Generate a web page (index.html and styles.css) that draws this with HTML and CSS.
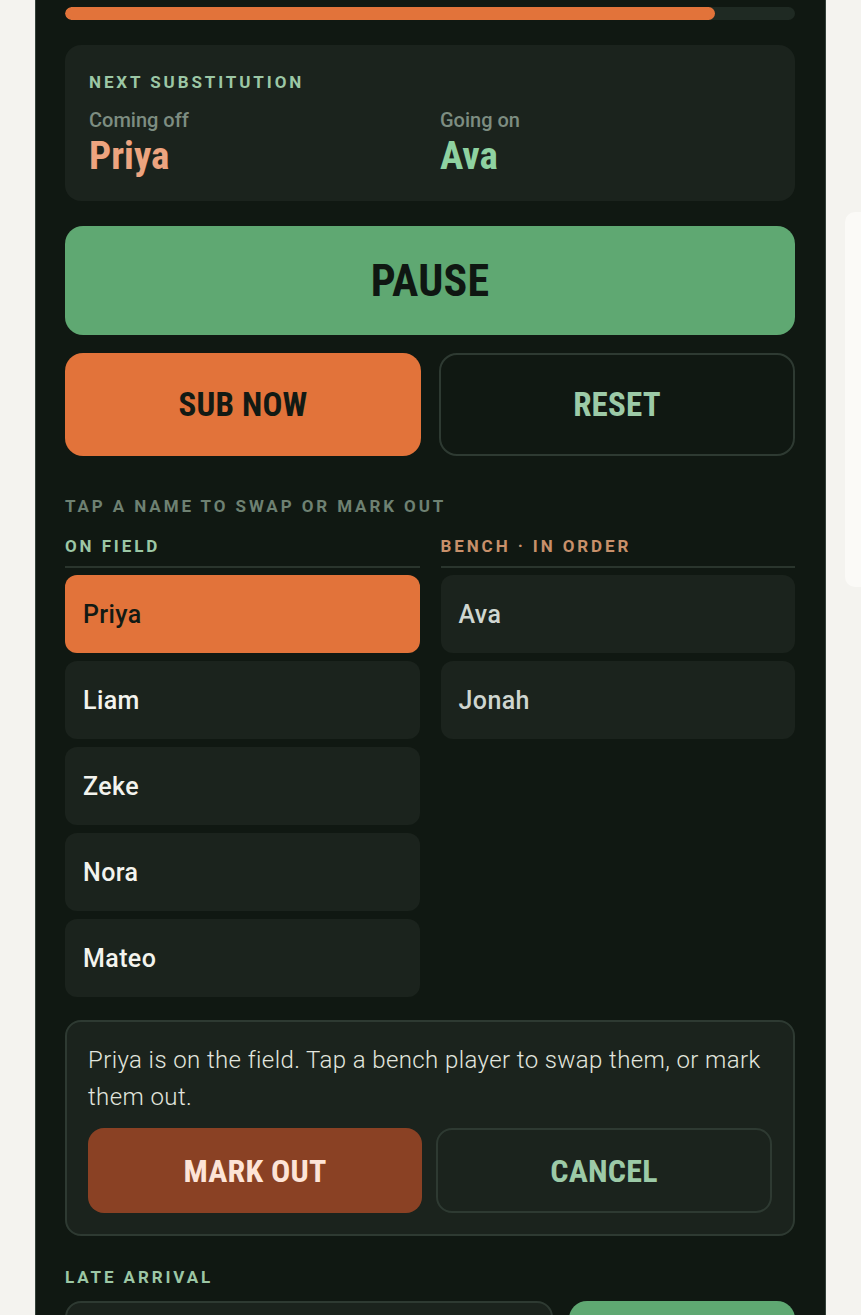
FILE: index.html
```html
<!DOCTYPE html>
<html lang="en">
<head>
<meta charset="utf-8">
<title>Substitution</title>
<link rel="stylesheet" href="styles.css">
</head>
<body>
<div class="page">
  <main class="panel">
    <div class="progress"><div class="progress-fill" style="width: 89%"></div></div>

    <section class="next-card">
      <div class="label label-green">NEXT SUBSTITUTION</div>
      <div class="next-grid">
        <div class="next-col">
          <div class="next-sub">Coming off</div>
          <div class="next-name name-off">Priya</div>
        </div>
        <div class="next-col">
          <div class="next-sub">Going on</div>
          <div class="next-name name-on">Ava</div>
        </div>
      </div>
    </section>

    <button class="btn btn-pause">PAUSE</button>

    <div class="btn-row">
      <button class="btn btn-sub">SUB NOW</button>
      <button class="btn btn-outline">RESET</button>
    </div>

    <div class="label label-muted hint">TAP A NAME TO SWAP OR MARK OUT</div>

    <div class="lists">
      <div class="list">
        <div class="list-head label label-green">ON FIELD</div>
        <div class="player player-selected">Priya</div>
        <div class="player">Liam</div>
        <div class="player">Zeke</div>
        <div class="player">Nora</div>
        <div class="player">Mateo</div>
      </div>
      <div class="list">
        <div class="list-head label label-tan">BENCH · IN ORDER</div>
        <div class="player player-bench">Ava</div>
        <div class="player player-bench">Jonah</div>
      </div>
    </div>

    <section class="info">
      <p class="info-text">Priya is on the field. Tap a bench player to swap them, or mark them out.</p>
      <div class="info-actions">
        <button class="btn btn-markout">MARK OUT</button>
        <button class="btn btn-outline btn-cancel">CANCEL</button>
      </div>
    </section>

    <div class="label label-green late">LATE ARRIVAL</div>
    <div class="late-row">
      <div class="late-input"></div>
      <button class="btn btn-add"></button>
    </div>
  </main>
  <aside class="side-card"></aside>
</div>
</body>
</html>
```

FILE: styles.css
```css
* { box-sizing: border-box; }

html, body {
  margin: 0;
  padding: 0;
  height: 100%;
  overflow: hidden;
  background: #f4f3ef;
  font-family: Roboto, "Noto Sans", sans-serif;
}

.page {
  display: flex;
  align-items: flex-start;
  padding-left: 35px;
  height: 1315px;
  overflow: hidden;
}

.panel {
  flex: 0 0 791px;
  width: 791px;
  min-height: 1400px;
  background: #101812;
  border-left: 1px solid #34413a;
  border-right: 1px solid #34413a;
  padding: 7px 30px 0 29px;
  display: flex;
  flex-direction: column;
}

.side-card {
  flex: 0 0 300px;
  margin-left: 19px;
  margin-top: 212px;
  height: 375px;
  background: #fbfaf7;
  border-radius: 10px;
}

.progress {
  height: 13px;
  border-radius: 7px;
  background: #1f2a23;
  overflow: hidden;
}
.progress-fill {
  height: 100%;
  background: #e2733a;
  border-radius: 7px;
}

.label {
  font-family: Roboto, "Noto Sans", sans-serif;
  font-weight: 700;
  font-size: 17px;
  line-height: 20px;
  letter-spacing: 2.9px;
}
.label-green { color: #9cc7a5; }
.label-muted { color: #6e8172; }
.label-tan { color: #c8906a; }

.next-card {
  margin-top: 25px;
  background: #1b231d;
  border-radius: 16px;
  padding: 27px 24px 23px;
}
.next-grid {
  margin-top: 15px;
  display: grid;
  grid-template-columns: 1fr 1fr;
  column-gap: 20px;
}
.next-sub {
  font-size: 20px;
  line-height: 26px;
  font-weight: 500;
  color: #7d8d81;
}
.next-name {
  font-family: "Roboto Condensed", "DejaVu Sans Condensed", "Liberation Sans Narrow", sans-serif;
  font-weight: 700;
  font-size: 39px;
  line-height: 44px;
  margin-top: 1px;
}
.name-off { color: #eda47f; }
.name-on { color: #8fd2a1; }

.btn {
  display: flex;
  align-items: center;
  justify-content: center;
  border: 0;
  margin: 0;
  font-family: "Roboto Condensed", "DejaVu Sans Condensed", "Liberation Sans Narrow", sans-serif;
  font-weight: 700;
  letter-spacing: 0.2px;
  cursor: pointer;
}

.btn-pause {
  margin-top: 25px;
  height: 109px;
  border-radius: 18px;
  background: #5fa872;
  color: #0f1712;
  font-size: 44px;
}

.btn-row {
  margin-top: 18px;
  display: grid;
  grid-template-columns: 1fr 1fr;
  column-gap: 18px;
}
.btn-row .btn {
  height: 103px;
  border-radius: 18px;
  font-size: 33px;
}
.btn-sub {
  background: #e2733a;
  color: #121a14;
}
.btn-outline {
  background: transparent;
  border: 2px solid #2e3a32;
  color: #9ccaa7;
}

.hint { margin-top: 40px; }

.lists {
  margin-top: 20px;
  display: grid;
  grid-template-columns: 1fr 1fr;
  column-gap: 21px;
  align-items: start;
}
.list {
  display: flex;
  flex-direction: column;
  gap: 8px;
}
.list-head {
  padding-bottom: 10px;
  border-bottom: 2px solid #2a352d;
  margin-bottom: -1px;
}
.player {
  height: 78px;
  border-radius: 12px;
  background: #1b231d;
  display: flex;
  align-items: center;
  padding-left: 18px;
  font-size: 25px;
  font-weight: 500;
  letter-spacing: 0.4px;
  color: #f3f3ee;
}
.player-selected {
  background: #e2733a;
  color: #121a14;
}
.player-bench { color: #cfd6d0; }

.info {
  margin-top: 23px;
  border: 2px solid #2e3a32;
  border-radius: 16px;
  background: #1b231d;
  padding: 20px 21px 21px;
}
.info-text {
  margin: 0 -4px 0 0;
  font-size: 24px;
  line-height: 37px;
  font-weight: 300;
  letter-spacing: 0.4px;
  color: #e2e6df;
}
.info-actions {
  margin-top: 12px;
  display: grid;
  grid-template-columns: 334px 1fr;
  column-gap: 14px;
}
.info-actions .btn {
  height: 85px;
  border-radius: 16px;
  font-size: 32px;
}
.btn-markout {
  background: #8a4124;
  color: #fde4d7;
}
.btn-cancel { color: #9ccaa7; }

.late { margin-top: 31px; }
.late-row {
  margin-top: 14px;
  display: grid;
  grid-template-columns: 488px 1fr;
  column-gap: 16px;
}
.late-input {
  height: 80px;
  border: 2px solid #2e3a32;
  border-radius: 16px;
  background: #1b231d;
}
.btn-add {
  height: 80px;
  border-radius: 18px;
  background: #5fa872;
}
```
